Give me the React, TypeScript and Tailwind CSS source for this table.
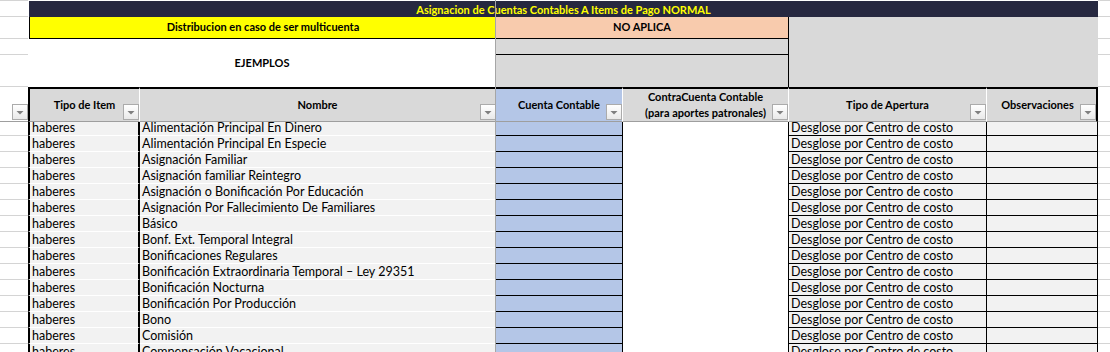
import React from "react";

const names = [
  "Alimentación Principal En Dinero",
  "Alimentación Principal En Especie",
  "Asignación Familiar",
  "Asignación familiar Reintegro",
  "Asignación o Bonificación Por Educación",
  "Asignación Por Fallecimiento De Familiares",
  "Básico",
  "Bonf. Ext. Temporal Integral",
  "Bonificaciones Regulares",
  "Bonificación Extraordinaria Temporal – Ley 29351",
  "Bonificación Nocturna",
  "Bonificación Por Producción",
  "Bono",
  "Comisión",
  "Compensación Vacacional",
];

const COLS = "grid grid-cols-[28px_112px_356px_127px_166px_198px_111px_12px]";

function FilterButton() {
  return (
    <span className="absolute right-0 bottom-[1px] flex h-4 w-4 items-center justify-center border border-[#ababab] bg-linear-to-b from-white to-[#e9e9e9]">
      <svg width="14" height="14" viewBox="0 0 14 14">
        <polygon points="3.5,6 10.5,6 7,9.5" fill="#7f7f7f" />
      </svg>
    </span>
  );
}

export default function App() {
  return (
    <div className="relative h-[352px] w-[1110px] overflow-hidden bg-white font-['Lato',sans-serif] text-black">
      {/* top section */}
      <div className={`${COLS} grid-rows-[1px_16px_22px_16px_32px]`}>
        <div className="col-start-1 row-start-1 bg-[#d4d4d4]" />
        <div className="col-start-2 col-span-6 row-start-1 bg-white" />
        <div className="col-start-8 row-start-1 bg-[#d4d4d4]" />

        <div className="col-start-2 col-span-6 row-start-2 ml-px flex items-center justify-center bg-[#262840] text-[11px] font-bold leading-none text-[#ffff00]">
          Asignacion de Cuentas Contables A Items de Pago NORMAL
        </div>

        <div className="col-start-1 row-start-2 border-b border-[#d4d4d4]" />
        <div className="col-start-1 row-start-3 border-b border-[#d4d4d4]" />
        <div className="col-start-1 row-start-4 border-b border-[#d4d4d4]" />
        <div className="col-start-1 row-start-5 border-b border-[#d4d4d4]" />
        <div className="col-start-8 row-start-2 border-b border-[#d4d4d4]" />
        <div className="col-start-8 row-start-3 border-b border-[#d4d4d4]" />
        <div className="col-start-8 row-start-4 border-b border-[#d4d4d4]" />
        <div className="col-start-8 row-start-5 border-b border-[#d4d4d4]" />

        <div className="col-start-2 col-span-2 row-start-3 ml-px flex items-center justify-center border-b border-l border-black bg-[#ffff00] text-[11px] font-bold">
          Distribucion en caso de ser multicuenta
        </div>
        <div className="col-start-4 col-span-2 row-start-3 flex items-center justify-center border-r border-b border-black bg-[#f8cbad] text-[11px] font-bold">
          NO APLICA
        </div>
        <div className="col-start-6 col-span-2 row-start-3 row-span-3 bg-[#d9d9d9]" />

        <div className="col-start-2 col-span-2 row-start-4 row-span-2 flex items-center justify-center bg-white text-[11px] font-bold">
          EJEMPLOS
        </div>
        <div className="col-start-4 col-span-2 row-start-4 border-r border-b border-black bg-[#d9d9d9]" />
        <div className="col-start-4 col-span-2 row-start-5 border-r border-black bg-[#d9d9d9]" />
      </div>

      {/* header row */}
      <div className={`${COLS} h-[33px] text-[11px] font-bold`}>
        <div className="relative border-b border-[#9e9e9e]">
          <FilterButton />
        </div>
        <div className="relative flex items-center justify-center border-t-2 border-l-2 border-r border-b border-black border-r-white border-b-[#9e9e9e] bg-[#d9d9d9]">
          Tipo de Item
          <FilterButton />
        </div>
        <div className="relative flex items-center justify-center border-t-2 border-b border-black border-b-[#9e9e9e] bg-[#d9d9d9] pr-px">
          Nombre
          <FilterButton />
        </div>
        <div className="relative flex items-center justify-center border-t-2 border-r border-b border-black border-r-white border-b-[#9e9e9e] bg-[#b4c6e7]">
          Cuenta Contable
          <FilterButton />
        </div>
        <div className="relative flex flex-col items-center justify-center border-t-2 border-r border-b border-black border-r-white border-b-[#9e9e9e] bg-[#d9d9d9] leading-[16px]">
          <span>ContraCuenta Contable</span>
          <span>(para aportes patronales)</span>
          <FilterButton />
        </div>
        <div className="relative flex items-center justify-center border-t-2 border-r border-b border-black border-r-white border-b-[#9e9e9e] bg-[#d9d9d9]">
          Tipo de Apertura
          <FilterButton />
        </div>
        <div className="relative flex items-center justify-center border-t-2 border-r-2 border-b border-black border-b-[#9e9e9e] bg-[#d9d9d9] pr-[8px]">
          Observaciones
          <FilterButton />
        </div>
        <div className="border-b border-[#d4d4d4]" />
      </div>

      {/* body rows */}
      {names.map((n) => (
        <div key={n} className={`${COLS} h-4 text-[12.5px] leading-[14px]`}>
          <div className="border-b border-[#d4d4d4]" />
          <div className="overflow-hidden whitespace-nowrap border-r-2 border-l-2 border-b border-black border-b-white bg-[#f2f2f2] pt-px pl-[2px]">
            haberes
          </div>
          <div className="overflow-hidden whitespace-nowrap border-b border-white bg-[#f2f2f2] pt-px pl-[2px]">
            {n}
          </div>
          <div className="border-r border-b border-black bg-[#b4c6e7]" />
          <div className="border-r border-black bg-white" />
          <div className="overflow-hidden whitespace-nowrap border-r border-b border-black bg-[#f2f2f2] pt-px pl-[2px]">
            Desglose por Centro de costo
          </div>
          <div className="border-r border-b border-black bg-[#f2f2f2]" />
          <div className="border-b border-[#d4d4d4]" />
        </div>
      ))}

      {/* page break line */}
      <div className="absolute top-0 left-[495px] h-full w-px bg-[#a6a6a6]" />
    </div>
  );
}
